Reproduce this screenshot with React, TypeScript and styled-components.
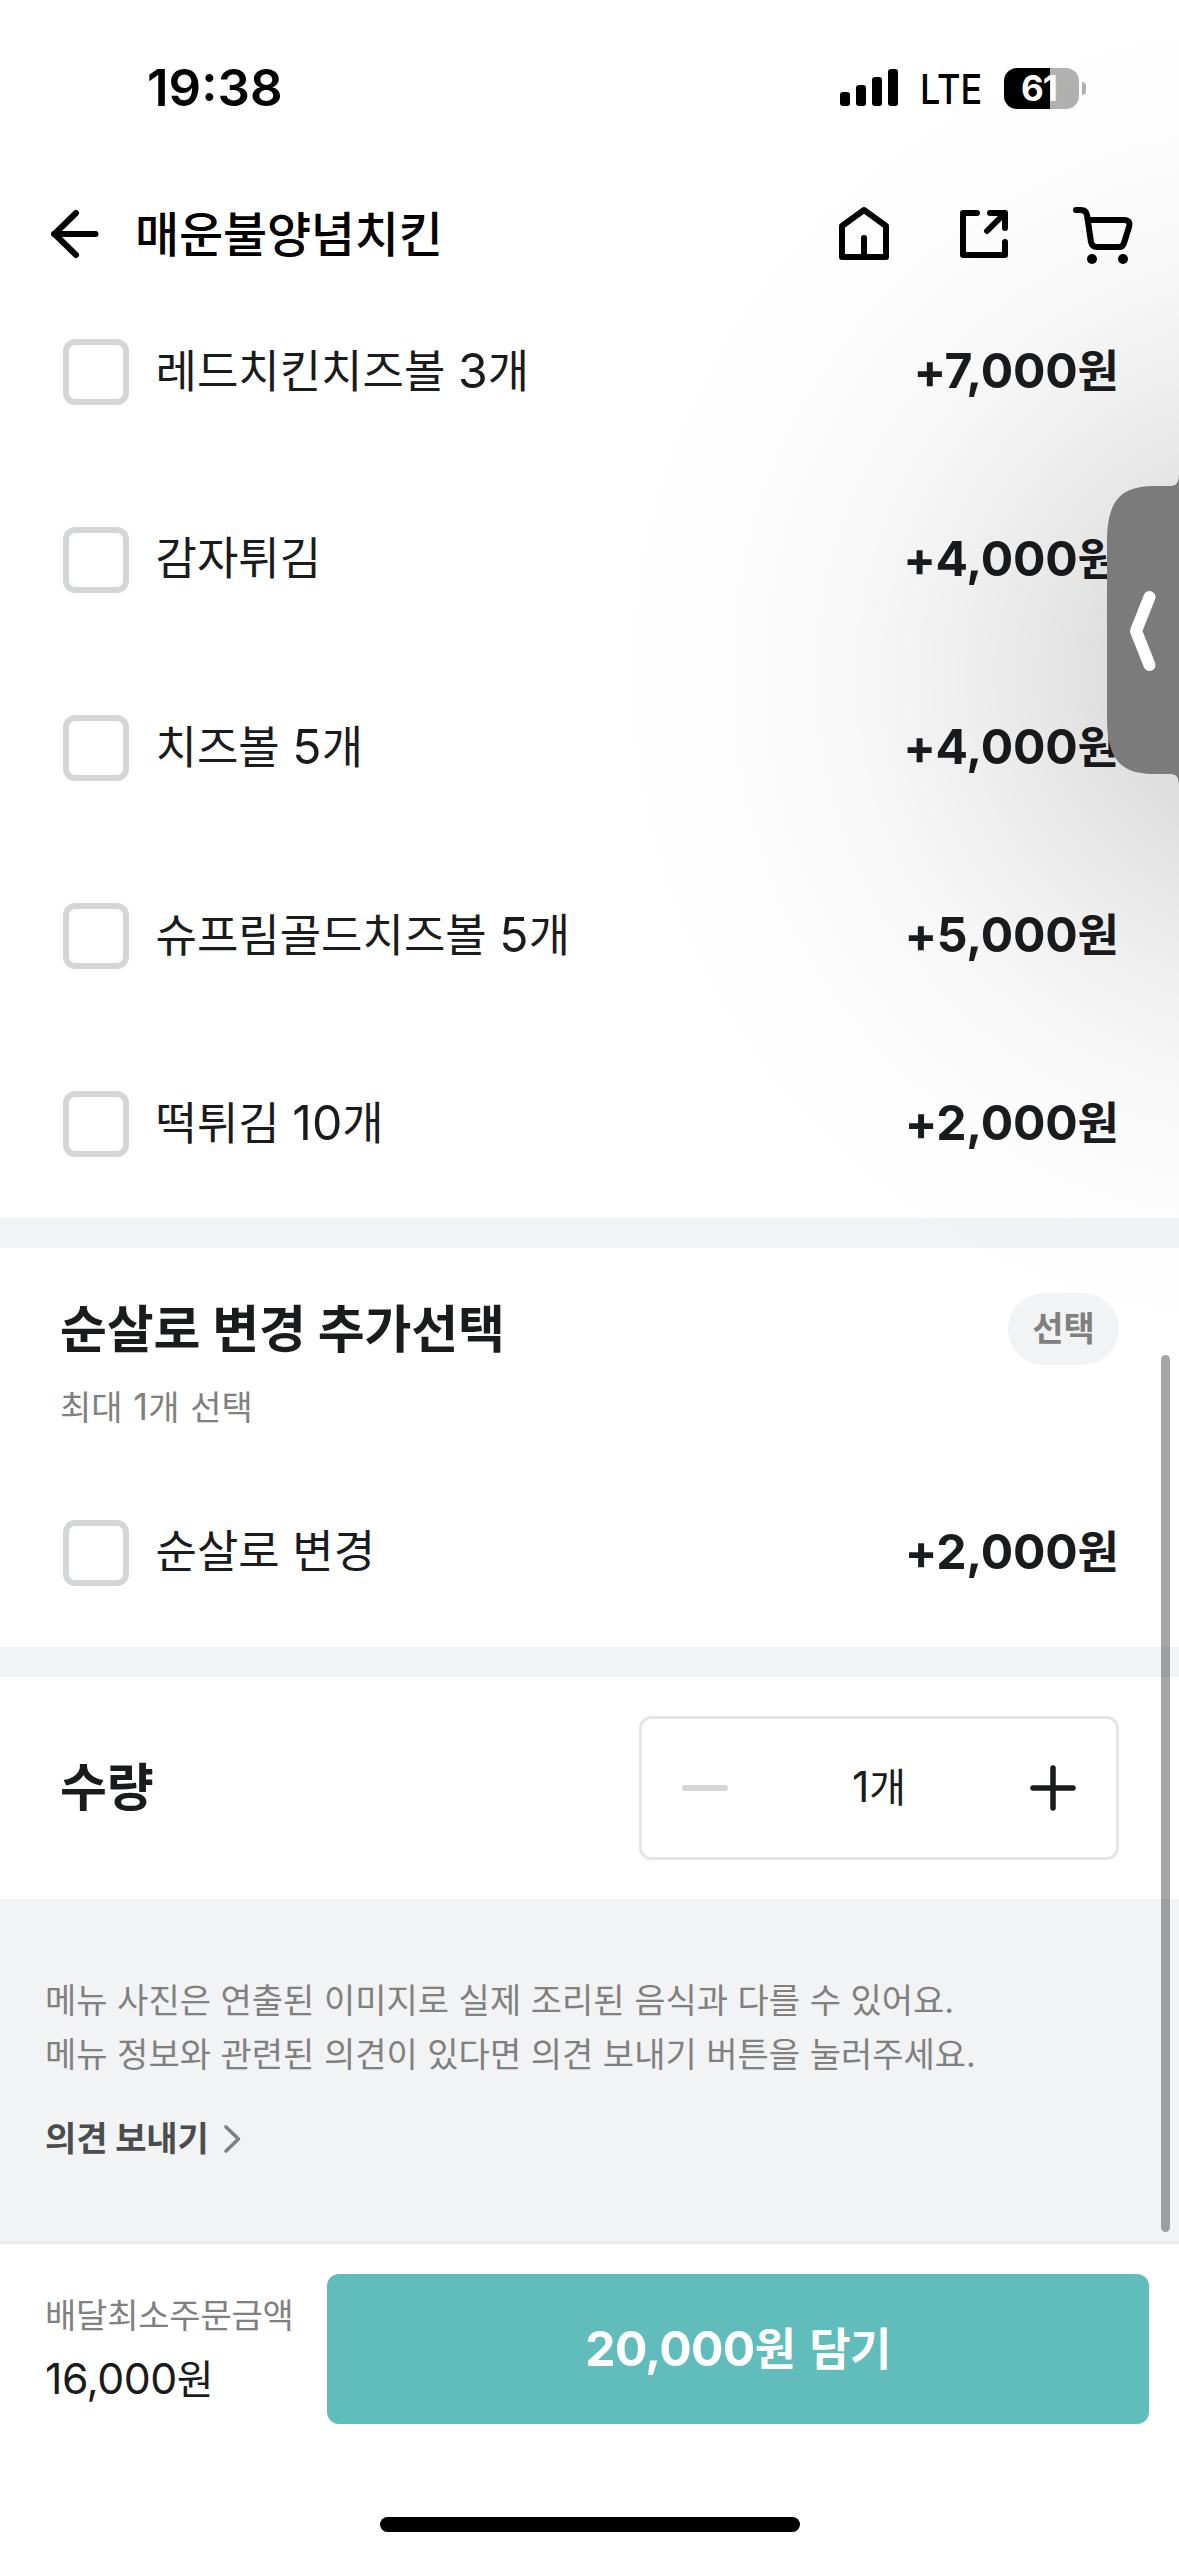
import React from "react";
import styled, { createGlobalStyle } from "styled-components";

const GlobalStyle = createGlobalStyle`
  * { box-sizing: border-box; }
  html, body { margin: 0; background: #fff; }
  body {
    font-family: Inter, "Noto Sans CJK KR", sans-serif;
    color: #1a1b1d;
    -webkit-font-smoothing: antialiased;
  }
  button { border: 0; padding: 0; background: none; font: inherit; color: inherit; }
`;

const Screen = styled.div`
  position: relative;
  display: flex;
  flex-direction: column;
  width: 1179px;
  height: 2556px;
  overflow: hidden;
  background: #fff;
`;

const StatusBar = styled.div`
  display: flex;
  align-items: center;
  justify-content: space-between;
  height: 176px;
  padding: 0 93px 0 147px;
  color: #000;
`;

const Clock = styled.div`
  font-size: 51px;
  font-weight: 600;
  line-height: 60px;
`;

const StatusRight = styled.div`
  display: flex;
  align-items: center;
`;

const Carrier = styled.div`
  width: 62px;
  margin: 2px 22px 0;
  font-size: 41px;
  font-weight: 500;
  line-height: 44px;
  transform: scaleX(0.88);
  transform-origin: left center;
`;

const Battery = styled.div`
  display: flex;
  align-items: center;
  gap: 3px;
`;

const BatteryBody = styled.div`
  display: flex;
  align-items: center;
  justify-content: center;
  width: 75px;
  height: 41px;
  padding-right: 5px;
  border-radius: 13px;
  background: linear-gradient(90deg, #000 61%, #b1b1b1 61%);
  color: #fff;
  font-size: 35px;
  font-weight: 700;
  letter-spacing: -1px;
  line-height: 41px;
`;

const BatteryTip = styled.div`
  width: 4px;
  height: 13px;
  border-radius: 0 4px 4px 0;
  background: #b1b1b1;
`;

const Header = styled.header`
  display: flex;
  align-items: center;
  justify-content: space-between;
  height: 102px;
  padding: 14px 43px 0 48px;
  color: #000;
`;

const HeaderSide = styled.div<{ $gap: number }>`
  display: flex;
  align-items: center;
  gap: ${(p) => p.$gap}px;
`;

const HeaderTitle = styled.h1`
  margin: 1px 0 0;
  font-size: 48px;
  font-weight: 500;
  letter-spacing: -0.2px;
  line-height: 60px;
`;

const OptionList = styled.div`
  display: flex;
  flex-direction: column;
`;

const OptionRow = styled.label`
  display: flex;
  align-items: center;
  height: 188px;
  padding: 0 60px 0 63px;
`;

const CheckBox = styled.span`
  width: 66px;
  height: 66px;
  border: 6px solid #d5d6d8;
  border-radius: 12px;
  background: #fff;
`;

const Num = styled.span`
  font-size: 1.07em;
`;

const OptionName = styled.span`
  margin: -2px auto 0 26.5px;
  font-size: 45px;
  line-height: 60px;
`;

const OptionPrice = styled.span`
  margin-top: -2px;
  font-size: 45px;
  font-weight: 600;
  line-height: 60px;

  ${Num} {
    font-weight: 700;
    letter-spacing: -0.2px;
  }
`;

const Divider = styled.div`
  height: 30px;
  background: #f2f3f5;
`;

const GroupHead = styled.div`
  display: flex;
  align-items: flex-start;
  justify-content: space-between;
  height: 211px;
  padding: 45px 60px 0;
`;

const GroupTitle = styled.h2`
  margin: 0;
  font-size: 51px;
  font-weight: 700;
  letter-spacing: -0.15px;
  line-height: 74px;
`;

const GroupHint = styled.p`
  margin: 18px 0 0;
  color: #808080;
  font-size: 34px;
  line-height: 44px;
  word-spacing: 1.2px;
`;

const Tag = styled.span`
  display: flex;
  align-items: center;
  justify-content: center;
  width: 111px;
  height: 72px;
  border-radius: 36px;
  background: #f2f3f5;
  color: #808080;
  font-size: 34px;
  font-weight: 700;
  line-height: 44px;
`;

const Quantity = styled.section`
  display: flex;
  align-items: center;
  justify-content: space-between;
  height: 222px;
  padding: 0 60px;
`;

const Stepper = styled.div`
  display: flex;
  align-items: center;
  justify-content: space-between;
  width: 480px;
  height: 144px;
  padding: 0 38px;
  border: 3px solid #e4e5e7;
  border-radius: 12px;
`;

const StepCount = styled.span`
  margin-top: -2px;
  font-size: 40px;
  line-height: 60px;
`;

const Notice = styled.section`
  height: 342px;
  padding: 75px 45px 0;
  background: #f2f3f5;
  color: #808080;
`;

const NoticeText = styled.p`
  margin: 0;
  font-size: 34px;
  line-height: 54px;
`;

const Feedback = styled.button`
  display: flex;
  align-items: center;
  gap: 13px;
  margin-top: 30px;
  color: #4b4c4e;
  font-size: 34px;
  font-weight: 700;
  letter-spacing: -0.15px;
  line-height: 54px;
`;

const OrderBar = styled.footer`
  display: flex;
  align-items: flex-start;
  justify-content: space-between;
  height: 276px;
  padding: 30px 30px 0 45px;
  border-top: 3px solid #e9eaeb;
`;

const Minimum = styled.div`
  display: flex;
  flex-direction: column;
  padding-top: 16px;
`;

const MinimumLabel = styled.span`
  color: #808080;
  font-size: 34px;
  letter-spacing: -0.2px;
  line-height: 52px;
`;

const MinimumValue = styled.span`
  font-size: 40px;
  letter-spacing: -0.5px;
  line-height: 73px;
`;

const AddButton = styled.button`
  width: 822px;
  height: 150px;
  padding-bottom: 6px;
  border-radius: 12px;
  background: #60bdbc;
  color: #fff;
  font-size: 45px;
  font-weight: 700;
  letter-spacing: -0.7px;
  word-spacing: 4px;
`;

const HomeIndicator = styled.div`
  align-self: center;
  width: 420px;
  height: 15px;
  border-radius: 8px;
  background: #000;
`;

const PanelShade = styled.div`
  position: absolute;
  top: 0;
  right: 0;
  width: 620px;
  height: 1400px;
  pointer-events: none;
  background: radial-gradient(
    circle 700px at calc(100% + 100px) 675px,
    rgba(0, 0, 0, 0.14) 100px,
    rgba(0, 0, 0, 0.12) 180px,
    rgba(0, 0, 0, 0.1) 220px,
    rgba(0, 0, 0, 0.058) 330px,
    rgba(0, 0, 0, 0.028) 430px,
    rgba(0, 0, 0, 0.014) 500px,
    rgba(0, 0, 0, 0.005) 600px,
    rgba(0, 0, 0, 0) 700px
  );
`;

const PanelHandle = styled.svg`
  position: absolute;
  top: 476px;
  right: 0;
`;

const ScrollThumb = styled.div`
  position: absolute;
  top: 1355px;
  right: 9px;
  width: 9px;
  height: 877px;
  border-radius: 5px;
  background: rgba(0, 0, 0, 0.35);
`;

/* Latin digits are drawn slightly larger so they sit evenly beside Hangul. */
const Mixed = ({ text }: { text: string }) => (
  <>
    {text.split(/([+\d,]+)/).map((part, i) => (i % 2 ? <Num key={i}>{part}</Num> : part))}
  </>
);

const SignalIcon = () => (
  <svg width="58" height="38" viewBox="0 0 58 38">
    <rect x="0" y="23" width="10" height="14" rx="3" />
    <rect x="16" y="16" width="10" height="21" rx="3" />
    <rect x="32" y="8" width="10" height="29" rx="3" />
    <rect x="48" y="0" width="10" height="37" rx="3" />
  </svg>
);

const iconStroke = {
  fill: "none",
  stroke: "currentColor",
  strokeWidth: 6,
  strokeLinecap: "round" as const,
  strokeLinejoin: "round" as const,
};

const BackIcon = () => (
  <svg width="54" height="60" viewBox="0 0 54 60" {...iconStroke}>
    <path d="M47.500 30H6M28 9L6.500 30L28 51" />
  </svg>
);

const HomeIcon = () => (
  <svg width="60" height="60" viewBox="0 0 60 60" {...iconStroke}>
    <path d="M8 22L30 6L52 22V53H8ZM30 34V53" />
  </svg>
);

const ShareIcon = () => (
  <svg width="60" height="60" viewBox="0 0 60 60" {...iconStroke}>
    <path d="M23 9H9V51H51V38M36 9H51V24M51 9L33 27" />
  </svg>
);

const CartGlyph = styled.svg`
  margin-left: -4px;
`;

const CartIcon = () => (
  <CartGlyph width="66" height="60" viewBox="0 0 66 60" {...iconStroke}>
    <path d="M6 6H11Q16 6 17 11L21 38Q22 43 27 43H49Q53 43 54 39L59 23Q61 16 54 16H18" />
    <circle cx="22" cy="55" r="5" fill="currentColor" stroke="none" />
    <circle cx="53" cy="55" r="5" fill="currentColor" stroke="none" />
  </CartGlyph>
);

const Option = ({ name, price }: { name: string; price: string }) => (
  <OptionRow>
    <CheckBox />
    <OptionName><Mixed text={name} /></OptionName>
    <OptionPrice><Mixed text={price} /></OptionPrice>
  </OptionRow>
);

const sides = [
  { name: "레드치킨치즈볼 3개", price: "+7,000원" },
  { name: "감자튀김", price: "+4,000원" },
  { name: "치즈볼 5개", price: "+4,000원" },
  { name: "슈프림골드치즈볼 5개", price: "+5,000원" },
  { name: "떡튀김 10개", price: "+2,000원" },
];

export default function App() {
  return (
    <Screen>
      <GlobalStyle />
      <StatusBar>
        <Clock>19:38</Clock>
        <StatusRight>
          <SignalIcon />
          <Carrier>LTE</Carrier>
          <Battery>
            <BatteryBody>61</BatteryBody>
            <BatteryTip />
          </Battery>
        </StatusRight>
      </StatusBar>
      <Header>
        <HeaderSide $gap={33}>
          <BackIcon />
          <HeaderTitle>매운불양념치킨</HeaderTitle>
        </HeaderSide>
        <HeaderSide $gap={60}>
          <HomeIcon />
          <ShareIcon />
          <CartIcon />
        </HeaderSide>
      </Header>
      <OptionList>
        {sides.map((s) => (
          <Option key={s.name} {...s} />
        ))}
      </OptionList>
      <Divider />
      <GroupHead>
        <div>
          <GroupTitle>순살로 변경 추가선택</GroupTitle>
          <GroupHint><Mixed text="최대 1개 선택" /></GroupHint>
        </div>
        <Tag>선택</Tag>
      </GroupHead>
      <OptionList>
        <Option name="순살로 변경" price="+2,000원" />
      </OptionList>
      <Divider />
      <Quantity>
        <GroupTitle>수량</GroupTitle>
        <Stepper>
          <svg width="50" height="50" viewBox="0 0 50 50" {...iconStroke} stroke="#d5d6d8">
            <path d="M5 25H45" />
          </svg>
          <StepCount><Mixed text="1개" /></StepCount>
          <svg width="50" height="50" viewBox="0 0 50 50" {...iconStroke} strokeWidth={5.5}>
            <path d="M5 25H45M25 5V45" />
          </svg>
        </Stepper>
      </Quantity>
      <Notice>
        <NoticeText>메뉴 사진은 연출된 이미지로 실제 조리된 음식과 다를 수 있어요.</NoticeText>
        <NoticeText>메뉴 정보와 관련된 의견이 있다면 의견 보내기 버튼을 눌러주세요.</NoticeText>
        <Feedback>
          의견 보내기
          <svg width="22" height="34" viewBox="0 0 22 34" {...iconStroke} stroke="#808080" strokeWidth={3.6}>
            <path d="M4 5L16.500 17L4 29" />
          </svg>
        </Feedback>
      </Notice>
      <OrderBar>
        <Minimum>
          <MinimumLabel>배달최소주문금액</MinimumLabel>
          <MinimumValue><Mixed text="16,000원" /></MinimumValue>
        </Minimum>
        <AddButton><Mixed text="20,000원 담기" /></AddButton>
      </OrderBar>
      <HomeIndicator />
      <PanelShade />
      <PanelHandle width="72" height="308" viewBox="0 0 72 308">
        <path
          d="M72 0C71 8 69 10 62 10H45C14 11 0 24 0 66V242C0 284 14 297 45 298H62C69 298 71 300 72 308Z"
          fill="#7b7b7b"
        />
        <path d="M42.500 121L29 155L42.500 189" fill="none" stroke="#fff" strokeWidth="12" strokeLinecap="round" strokeLinejoin="round" />
      </PanelHandle>
      <ScrollThumb />
    </Screen>
  );
}
